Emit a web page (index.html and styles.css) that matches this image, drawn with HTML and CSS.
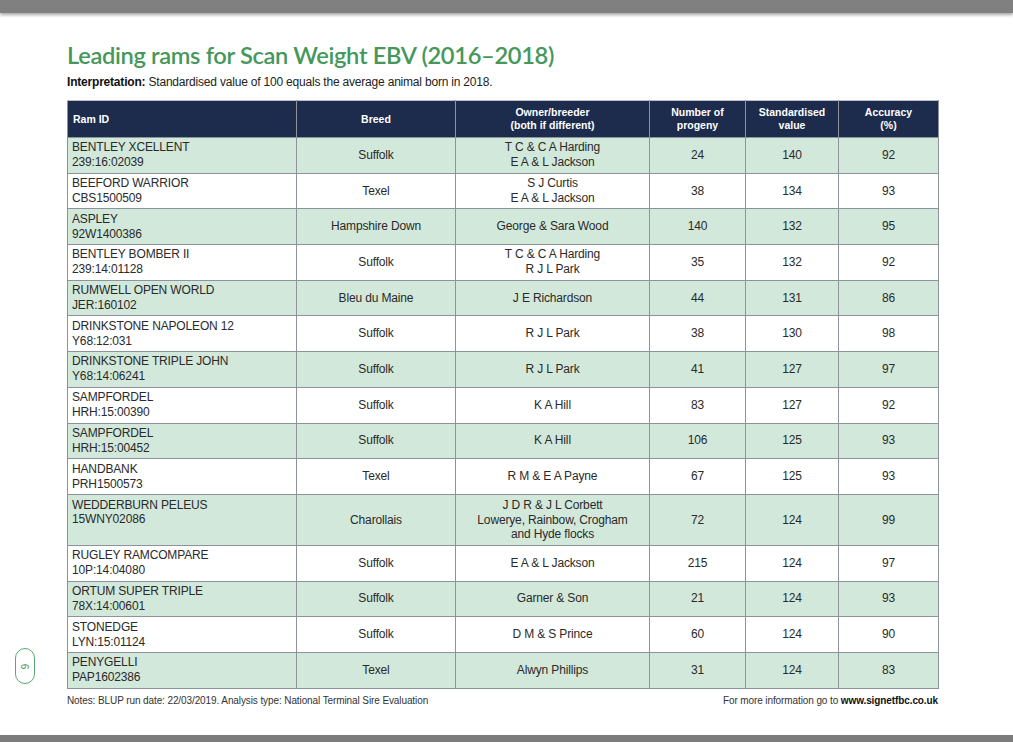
FILE: index.html
```html
<!DOCTYPE html>
<html lang="en">
<head>
<meta charset="utf-8">
<title>Leading rams for Scan Weight EBV (2016–2018)</title>
<link rel="stylesheet" href="styles.css">
</head>
<body>
<div class="frame">
  <div class="topbar"></div>
  <div class="page">
    <div class="pagenum"><span>6</span></div>
    <h1 class="title">Leading rams for Scan Weight EBV (2016–2018)</h1>
    <p class="interp"><b>Interpretation:</b> Standardised value of 100 equals the average animal born in 2018.</p>
    <table class="rams">
      <colgroup>
        <col class="c-id"><col class="c-breed"><col class="c-owner"><col class="c-num"><col class="c-std"><col class="c-acc">
      </colgroup>
      <thead>
        <tr>
          <th class="left">Ram ID</th>
          <th>Breed</th>
          <th>Owner/breeder<br>(both if different)</th>
          <th>Number of<br>progeny</th>
          <th>Standardised<br>value</th>
          <th>Accuracy<br>(%)</th>
        </tr>
      </thead>
      <tbody>
        <tr class="g"><td class="left">BENTLEY XCELLENT<br>239:16:02039</td><td>Suffolk</td><td>T C &amp; C A Harding<br>E A &amp; L Jackson</td><td>24</td><td>140</td><td>92</td></tr>
        <tr><td class="left">BEEFORD WARRIOR<br>CBS1500509</td><td>Texel</td><td>S J Curtis<br>E A &amp; L Jackson</td><td>38</td><td>134</td><td>93</td></tr>
        <tr class="g"><td class="left">ASPLEY<br>92W1400386</td><td>Hampshire Down</td><td>George &amp; Sara Wood</td><td>140</td><td>132</td><td>95</td></tr>
        <tr><td class="left">BENTLEY BOMBER II<br>239:14:01128</td><td>Suffolk</td><td>T C &amp; C A Harding<br>R J L Park</td><td>35</td><td>132</td><td>92</td></tr>
        <tr class="g"><td class="left">RUMWELL OPEN WORLD<br>JER:160102</td><td>Bleu du Maine</td><td>J E Richardson</td><td>44</td><td>131</td><td>86</td></tr>
        <tr><td class="left">DRINKSTONE NAPOLEON 12<br>Y68:12:031</td><td>Suffolk</td><td>R J L Park</td><td>38</td><td>130</td><td>98</td></tr>
        <tr class="g"><td class="left">DRINKSTONE TRIPLE JOHN<br>Y68:14:06241</td><td>Suffolk</td><td>R J L Park</td><td>41</td><td>127</td><td>97</td></tr>
        <tr><td class="left">SAMPFORDEL<br>HRH:15:00390</td><td>Suffolk</td><td>K A Hill</td><td>83</td><td>127</td><td>92</td></tr>
        <tr class="g"><td class="left">SAMPFORDEL<br>HRH:15:00452</td><td>Suffolk</td><td>K A Hill</td><td>106</td><td>125</td><td>93</td></tr>
        <tr><td class="left">HANDBANK<br>PRH1500573</td><td>Texel</td><td>R M &amp; E A Payne</td><td>67</td><td>125</td><td>93</td></tr>
        <tr class="g tall"><td class="left top">WEDDERBURN PELEUS<br>15WNY02086</td><td>Charollais</td><td>J D R &amp; J L Corbett<br>Lowerye, Rainbow, Crogham<br>and Hyde flocks</td><td>72</td><td>124</td><td>99</td></tr>
        <tr><td class="left">RUGLEY RAMCOMPARE<br>10P:14:04080</td><td>Suffolk</td><td>E A &amp; L Jackson</td><td>215</td><td>124</td><td>97</td></tr>
        <tr class="g"><td class="left">ORTUM SUPER TRIPLE<br>78X:14:00601</td><td>Suffolk</td><td>Garner &amp; Son</td><td>21</td><td>124</td><td>93</td></tr>
        <tr><td class="left">STONEDGE<br>LYN:15:01124</td><td>Suffolk</td><td>D M &amp; S Prince</td><td>60</td><td>124</td><td>90</td></tr>
        <tr class="g"><td class="left">PENYGELLI<br>PAP1602386</td><td>Texel</td><td>Alwyn Phillips</td><td>31</td><td>124</td><td>83</td></tr>
      </tbody>
    </table>
    <div class="notes">
      <span>Notes: BLUP run date: 22/03/2019. Analysis type: National Terminal Sire Evaluation</span>
      <span>For more information go to <b>www.signetfbc.co.uk</b></span>
    </div>
  </div>
  <div class="bottombar"></div>
</div>
</body>
</html>
```

FILE: styles.css
```css
html, body {
  margin: 0;
  padding: 0;
  background: #ffffff;
}
body {
  font-family: "Liberation Sans", Arial, sans-serif;
  color: #222222;
}
.frame {
  display: flex;
  flex-direction: column;
  height: 742px;
  overflow: hidden;
}
.topbar {
  height: 13px;
  background: #808080;
  box-shadow: 0 2px 3px rgba(0, 0, 0, 0.35);
  flex: none;
  position: relative;
  z-index: 1;
}
.page {
  flex: 1;
  position: relative;
  padding: 27px 0 0 67px;
}
.bottombar {
  height: 7px;
  background: #7c7c7c;
  flex: none;
}
.pagenum {
  position: absolute;
  left: 15px;
  top: 635px;
  width: 18px;
  height: 34px;
  border: 1.5px solid #5aa870;
  border-radius: 10px;
  display: flex;
  align-items: center;
  justify-content: center;
}
.pagenum span {
  display: block;
  transform: rotate(90deg);
  font-size: 10px;
  color: #4a9a5e;
}
.title {
  margin: 0;
  font-family: Lato, "Open Sans", sans-serif;
  font-weight: 600;
  font-size: 23.7px;
  line-height: 30px;
  color: #45985a;
  letter-spacing: -0.35px;
}
.interp {
  margin: 5px 0 0;
  font-size: 12px;
  line-height: 14px;
  letter-spacing: -0.2px;
  color: #222;
}
.interp b {
  color: #111;
}
.rams {
  margin-top: 11px;
  width: 871px;
  table-layout: fixed;
  border-collapse: collapse;
  font-size: 12px;
  border: 1px solid #8c939c;
}
.c-id { width: 229px; }
.c-breed { width: 159px; }
.c-owner { width: 194px; }
.c-num { width: 96px; }
.c-std { width: 93px; }
.c-acc { width: 100px; }
.rams th {
  background: #1d2b4d;
  color: #ffffff;
  font-weight: bold;
  font-size: 10.5px;
  line-height: 13px;
  height: 36px;
  padding: 0 4px;
  text-align: center;
  border: 1px solid #8c939c;
  border-top-color: #b8c0c8;
}
.rams th.left {
  text-align: left;
  padding-left: 5px;
}
.rams td {
  height: 34.7px;
  padding: 0 4px;
  line-height: 15px;
  text-align: center;
  vertical-align: middle;
  border: 1px solid #8c939c;
  background: #ffffff;
  color: #2a2a2a;
  letter-spacing: -0.15px;
}
.rams tr.g td {
  background: #d2e8da;
}
.rams td.left {
  text-align: left;
  padding-left: 4px;
}
.rams tr.tall td {
  height: 47px;
  line-height: 14.5px;
}
.rams td.top {
  vertical-align: top;
  padding-top: 3px;
}
.notes {
  width: 871px;
  margin-top: 6px;
  display: flex;
  justify-content: space-between;
  font-size: 10px;
  line-height: 12px;
  color: #333;
  letter-spacing: -0.1px;
}
.notes b {
  color: #111;
}
```
